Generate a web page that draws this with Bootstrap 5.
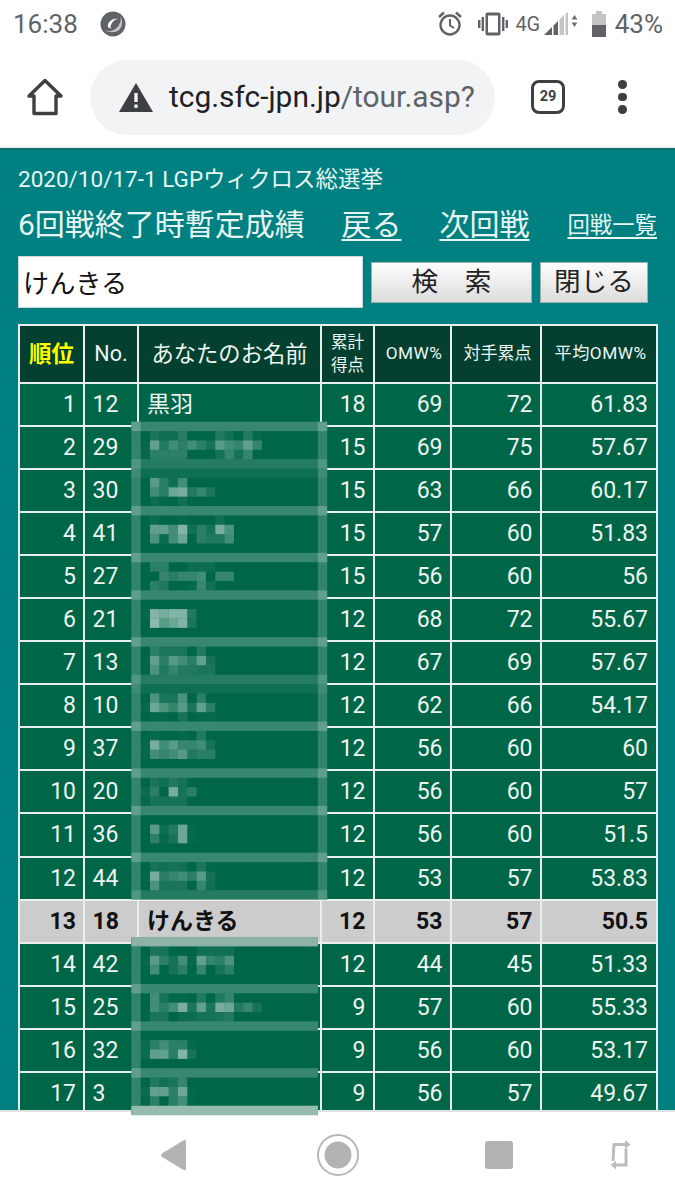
<!DOCTYPE html>
<html lang="ja">
<head>
<meta charset="utf-8">
<title>tour</title>
<link href="https://cdn.jsdelivr.net/npm/bootstrap@5.3.0/dist/css/bootstrap.min.css" rel="stylesheet">
<style>
html,body{height:1200px;margin:0}
body{font-family:Roboto,"Noto Sans CJK JP",sans-serif;background:#fff;width:675px;height:1200px}
.statusline{height:50px;flex:none;color:#5f6368;padding:0 12px 2px 13px}
.clock{font-size:26px;line-height:1}
.ballmark{margin-left:22px}
.net{font-size:20px;line-height:1;letter-spacing:-.3px;margin-left:7px}
.batt{font-size:26px;line-height:1;margin-left:8px}
.vibe{margin-left:15px}
.bars{margin-left:3px}
.cell{margin-left:13px}
.toolline{height:98px;flex:none;padding-bottom:4px}
.homeicon{margin-left:23px}
.urlpill{width:405px;height:75px;border-radius:38px;background:#f1f3f4;margin-left:23px;padding-left:28px;font-size:29.9px;color:#5f6368;white-space:nowrap}
.urlpill b{font-weight:400;color:#202124}
.warnicon{flex:none;margin-right:15px}
.tabcount{width:34px;height:34px;border:3px solid #3c4043;border-radius:8px;font-size:14.5px;font-weight:700;color:#3c4043;margin-left:36px;line-height:1}
.dots{margin-left:53px;gap:4px}
.dots i{display:block;width:8.5px;height:8.5px;border-radius:50%;background:#3c4043}
.pagearea{background:#008080;border-top:2px solid #0b7272;box-shadow:0 -2px 0 #e9f1ef;padding:15px 18px 0;color:#e8f4f2;min-height:0}
.eventline{font-size:22.5px;line-height:28px;height:28px;white-space:nowrap}
.titleline{line-height:40px;margin-top:12px;height:40px;white-space:nowrap}
.titleline a{color:inherit;text-decoration:underline;text-underline-offset:4px;text-decoration-thickness:2px}
.headname{font-size:30px;width:324px}
.headlink{font-size:30px;margin-right:38px}
.headsmall{font-size:22.4px}
.searchline{margin-top:11px;height:52px}
.nameinput{width:345px;height:52px;border:1px solid #cfd8d8;background:#fff;font-size:26.2px;color:#111;padding:0 4px;border-radius:0;outline:0}
.greybtn{height:41px;border:1px solid #9fb0b0;border-radius:0;background:linear-gradient(#fdfdfd,#dcdcdc);color:#222;font-size:26.6px;padding:0;line-height:1;margin-top:6px}
.findbtn{width:161px;margin-left:8px}
.closebtn{width:108px;margin-left:8px}
.rankwrap{margin-top:16px}
.ranktable{--bs-table-bg:#006648;--bs-table-color:#edf5f2;--bs-table-border-color:#e9efec;width:639px;table-layout:fixed;margin:0;border:2px solid #e9efec;font-size:23px}
.ranktable>:not(caption)>*>*{padding:0 7.5px;height:43.1px;vertical-align:middle;border-width:2px;line-height:1;color:#edf5f2;background:#006648;box-shadow:none}
.ranktable thead>tr>th{height:57.5px;background:#03402f;font-weight:400;text-align:center;padding:0;font-size:22.3px}
.ranktable thead>tr>th.rankhead{color:#ffff00;font-weight:700;font-size:22.5px}
.ranktable thead>tr>th.nohead{font-size:21.5px}
.ranktable thead>tr>th.twoline{font-size:16.6px;line-height:23px}
.ranktable thead>tr>th.omw{font-size:17.2px;letter-spacing:.5px;padding-left:3px}
.ranktable thead>tr>th.foe{font-size:17px;padding-left:3px}
.ranktable td:nth-child(2){padding-left:7.5px;text-align:left}
.ranktable td:nth-child(3){padding-left:8px;text-align:left}
.ranktable td:nth-child(1),.ranktable td:nth-child(n+4){text-align:right}
.ranktable td:nth-child(1){padding-right:7px}
.ranktable td:nth-child(7){padding-right:8px}
.ranktable tr.selfrow>td{background:#cccccc;color:#111;font-weight:700}
.w-rank{width:65px}.w-no{width:54px}.w-name{width:183px}.w-pts{width:53px}.w-omw{width:77px}.w-foe{width:90px}.w-avg{width:116px}
.softkeys{height:90px;flex:none;background:#fff;border-top:2px solid #dfe3e2}
.mosaicsheet{position:absolute;left:0;top:0;width:675px;height:1200px;pointer-events:none}
</style>
</head>
<body class="d-flex flex-column overflow-hidden position-relative">

<div class="statusline d-flex align-items-center">
  <span class="clock">16:38</span>
  <svg class="ballmark" width="26" height="26" viewBox="0 0 26 26" aria-hidden="true">
    <circle cx="13" cy="13" r="12.5" fill="#5f6368"/>
    <path d="M5 19c5 3 12 0 15-7 1-3 1-5 0-7 3 4 3 10-1 14-4 3-10 3-14 0z" fill="#c4c6c8"/>
    <path d="M8 13c2-4 6-6 10-5-3 0-6 3-7 6-1 2-1 3 1 3-3 1-5-1-4-4z" fill="#fff"/>
  </svg>
  <span class="ms-auto d-flex align-items-center">
    <svg width="26" height="28" viewBox="0 0 26 28" aria-hidden="true" fill="none" stroke="#5f6368" stroke-width="2.4">
      <circle cx="13" cy="15" r="9.5"/><path d="M13 9v6.5l4 2.500" stroke-width="2"/><path d="M2 7l5-4.500M24 7l-5-4.500" stroke-width="2.6"/>
    </svg>
    <svg class="vibe" width="30" height="26" viewBox="0 0 30 26" aria-hidden="true" fill="#5f6368">
      <path d="M9.500 1.500h11a2 2 0 0 1 2 2v19a2 2 0 0 1-2 2h-11a2 2 0 0 1-2-2v-19a2 2 0 0 1 2-2zm.5 3v17h10v-17z" fill-rule="evenodd"/>
      <rect x="3.600" y="6" width="2.400" height="14"/><rect x="0" y="9" width="2.400" height="8"/><rect x="24" y="6" width="2.400" height="14"/><rect x="27.600" y="9" width="2.400" height="8"/>
    </svg>
    <span class="net">4G</span>
    <svg class="bars" width="35" height="26" viewBox="0 0 35 26" aria-hidden="true">
      <path d="M1 24L9 16v8z" fill="#5f6368"/><path d="M10.500 14.500L15 10v14h-4.500z" fill="#5f6368"/>
      <path d="M16.500 8.500L21 4v20h-4.500z" fill="#c2c4c6"/><path d="M22.500 3L25 1v23h-2.500z" fill="#c2c4c6"/>
      <path d="M31.500 4l3 4.500h-6zM31.500 16l3-4.500h-6z" fill="#6f7378"/>
    </svg>
    <svg class="cell" width="16" height="28" viewBox="0 0 16 28" aria-hidden="true">
      <path d="M5 1h6v3h4v23H1V4h4z" fill="#c2c4c6"/><rect x="1" y="15" width="14" height="12" fill="#5f6368"/>
    </svg>
    <span class="batt">43%</span>
  </span>
</div>

<div class="toolline d-flex align-items-center">
  <svg class="homeicon" width="44" height="40" viewBox="0 0 44 40" aria-hidden="true" fill="none" stroke="#3c4043" stroke-width="3.4" stroke-linejoin="round">
    <path d="M22 3.500L6 19h5v17.500h22V19h5z"/>
  </svg>
  <div class="urlpill d-flex align-items-center">
    <svg class="warnicon" width="36" height="30" viewBox="0 0 36 30" aria-hidden="true">
      <path d="M18 1L35 30H1z" fill="#3c4043"/><rect x="16.300" y="11" width="3.400" height="9" fill="#f1f3f4"/><rect x="16.300" y="22.500" width="3.400" height="3.400" fill="#f1f3f4"/>
    </svg>
    <span><b>tcg.sfc-jpn.jp</b>/tour.asp?</span>
  </div>
  <div class="tabcount d-flex align-items-center justify-content-center">29</div>
  <div class="dots d-flex flex-column"><i></i><i></i><i></i></div>
</div>

<main class="pagearea flex-grow-1 overflow-hidden">
  <div class="eventline">2020/10/17-1 LGPウィクロス総選挙</div>
  <div class="titleline d-flex align-items-center">
    <span class="headname">6回戦終了時暫定成績</span>
    <a class="headlink" href="#">戻る</a>
    <a class="headlink" href="#">次回戦</a>
    <a class="headsmall" href="#">回戦一覧</a>
  </div>
  <div class="searchline d-flex align-items-start">
    <input class="nameinput" type="text" value="けんきる">
    <button class="btn greybtn findbtn" type="button">検　索</button>
    <button class="btn greybtn closebtn" type="button">閉じる</button>
  </div>
  <div class="rankwrap">
    <table class="table table-bordered ranktable">
      <colgroup><col class="w-rank"><col class="w-no"><col class="w-name"><col class="w-pts"><col class="w-omw"><col class="w-foe"><col class="w-avg"></colgroup>
      <thead>
        <tr><th class="rankhead">順位</th><th class="nohead">No.</th><th>あなたのお名前</th><th class="twoline">累計<br>得点</th><th class="omw">OMW%</th><th class="foe">対手累点</th><th class="omw">平均OMW%</th></tr>
      </thead>
      <tbody>
        <tr><td>1</td><td>12</td><td>黒羽</td><td>18</td><td>69</td><td>72</td><td>61.83</td></tr>
        <tr><td>2</td><td>29</td><td></td><td>15</td><td>69</td><td>75</td><td>57.67</td></tr>
        <tr><td>3</td><td>30</td><td></td><td>15</td><td>63</td><td>66</td><td>60.17</td></tr>
        <tr><td>4</td><td>41</td><td></td><td>15</td><td>57</td><td>60</td><td>51.83</td></tr>
        <tr><td>5</td><td>27</td><td></td><td>15</td><td>56</td><td>60</td><td>56</td></tr>
        <tr><td>6</td><td>21</td><td></td><td>12</td><td>68</td><td>72</td><td>55.67</td></tr>
        <tr><td>7</td><td>13</td><td></td><td>12</td><td>67</td><td>69</td><td>57.67</td></tr>
        <tr><td>8</td><td>10</td><td></td><td>12</td><td>62</td><td>66</td><td>54.17</td></tr>
        <tr><td>9</td><td>37</td><td></td><td>12</td><td>56</td><td>60</td><td>60</td></tr>
        <tr><td>10</td><td>20</td><td></td><td>12</td><td>56</td><td>60</td><td>57</td></tr>
        <tr><td>11</td><td>36</td><td></td><td>12</td><td>56</td><td>60</td><td>51.5</td></tr>
        <tr><td>12</td><td>44</td><td></td><td>12</td><td>53</td><td>57</td><td>53.83</td></tr>
        <tr class="selfrow"><td>13</td><td>18</td><td>けんきる</td><td>12</td><td>53</td><td>57</td><td>50.5</td></tr>
        <tr><td>14</td><td>42</td><td></td><td>12</td><td>44</td><td>45</td><td>51.33</td></tr>
        <tr><td>15</td><td>25</td><td></td><td>9</td><td>57</td><td>60</td><td>55.33</td></tr>
        <tr><td>16</td><td>32</td><td></td><td>9</td><td>56</td><td>60</td><td>53.17</td></tr>
        <tr><td>17</td><td>3</td><td></td><td>9</td><td>56</td><td>57</td><td>49.67</td></tr>
      </tbody>
    </table>
  </div>
</main>

<div class="softkeys position-relative">
  <svg width="675" height="88" viewBox="0 1112 675 88" aria-hidden="true" class="d-block">
    <path d="M186 1141v28a1.500 1.500 0 0 1-2 1.200l-22-13.200a2 2 0 0 1 0-3.400l22-13.600a1.500 1.500 0 0 1 2 1z" fill="#b3b3b3"/>
    <circle cx="338" cy="1155" r="20" fill="none" stroke="#b7b7b7" stroke-width="2"/><circle cx="338" cy="1155" r="13.500" fill="#b3b3b3"/>
    <rect x="485" y="1141" width="28" height="28" rx="3" fill="#b3b3b3"/>
    <path d="M613 1161l1-16.500h12M626 1148.500v16.500h-11" fill="none" stroke="#bdbdbd" stroke-width="3"/>
    <path d="M625 1140l5.500 4.500-5.500 4.500zM616 1160.500l-5.500 4.500 5.500 4.500z" fill="#bdbdbd"/>
  </svg>
</div>

<svg id="mosaic" class="mosaicsheet" viewBox="0 0 675 1200" aria-hidden="true"></svg>

<script src="https://cdn.jsdelivr.net/npm/bootstrap@5.3.0/dist/js/bootstrap.bundle.min.js"></script>
<script>
(function(){
  var X0=131.3,Y0=421.7,CW=9.33,CH=9.37,K=.85,out=[];
  function cell(c,r,w,h,fill,a){out.push('<rect x="'+(X0+c*CW).toFixed(2)+'" y="'+(Y0+r*CH).toFixed(2)+'" width="'+(w*CW).toFixed(2)+'" height="'+(h*CH).toFixed(2)+'" fill="'+fill+'"'+(a<1?' fill-opacity="'+a+'"':'')+'/>');}
  // opaque patches
  cell(0,0,21,51,'#006648',1);
  cell(0,55,20,19,'#006648',1);
  // horizontal bands [row, alpha, cols]
  [[0,.22,21],[4,.15,21],[5,.06,21],[9,.22,21],[14,.22,21],[18,.22,21],[23,.22,21],[27,.15,21],[28,.06,21],[32,.22,21],[37,.22,21],[41,.22,21],[46,.22,21],[50,.14,21],[60,.22,20],[64,.22,20],[69,.22,20]].forEach(function(b){cell(0,b[0],b[2],1,'#fff',b[1]);});
  // frame columns
  cell(0,0,1,51,'#fff',.2);cell(20,0,1,51,'#fff',.2);cell(0,56,1,17,'#fff',.2);
  cell(0,55,20,1,'#8fb2a6',1);cell(0,73,20,1,'#96bcaf',1);
  // text residue: row -> {column: alpha}
  var d={1:{2:.12,3:.07,4:.07,5:.18,9:.15,10:.08,12:.15,13:.03},
  2:{1:.03,2:.45,3:.15,4:.3,5:.2,6:.3,7:.2,8:.1,9:.4,10:.3,11:.25,12:.45,13:.25},
  3:{1:.03,2:.2,3:.2,4:.2,5:.2,9:.1,10:.25,11:.1,12:.25},
  6:{2:.4,3:.2,4:.07,5:.3},7:{2:.3,3:.2,4:.5,5:.55,6:.15,7:.25,8:.12},8:{2:.05,3:.02,5:.08},
  10:{2:.05,5:.03,9:.08},11:{2:.45,3:.45,4:.3,5:.6,6:.07,7:.2,8:.1,9:.55,10:.35},12:{2:.35,3:.05,4:.3,5:.5,7:.2,8:.15,9:.15,10:.3},
  15:{2:.2,3:.2,6:.06,7:.06,8:.06},16:{3:.25,4:.18,5:.25,6:.25,7:.3,9:.25,10:.25},17:{2:.2,3:.15,6:.03,7:.25,8:.08},
  20:{1:.03,2:.6,3:.55,4:.6,5:.6,6:.15},21:{2:.65,3:.4,4:.5,5:.6,6:.12},
  24:{2:.2,3:.12,4:.12,5:.12,7:.15},25:{2:.45,3:.2,4:.4,5:.3,6:.2,7:.45,8:.1},26:{2:.35,3:.15,4:.25,5:.15,6:.15,7:.12,8:.12},
  29:{2:.35,3:.12,4:.12,5:.35,7:.2},30:{1:.03,2:.5,3:.35,4:.25,5:.4,6:.12,7:.45,8:.2},31:{2:.03,3:.03,5:.1,7:.03,8:.03},
  33:{2:.03,5:.03,7:.15},34:{1:.03,2:.55,3:.3,4:.4,5:.25,6:.25,7:.3,8:.1},35:{1:.03,2:.3,3:.25,4:.3,5:.4,6:.15,7:.2,8:.2},
  38:{2:.12,3:.07,4:.15,5:.1},39:{1:.05,2:.2,4:.55,5:.1,6:.2},40:{1:.02,2:.1,3:.1,4:.1,5:.1},
  43:{2:.4,3:.07,4:.15,5:.5,6:.03},44:{2:.2,3:.03,4:.1,5:.5,6:.03},
  47:{2:.1,3:.08,4:.1,5:.08,7:.12,8:.02},48:{1:.02,2:.55,3:.2,4:.25,5:.3,6:.2,7:.4,8:.1},49:{2:.35,3:.12,4:.12,5:.12,7:.25,8:.08},
  56:{2:.12,3:.1,7:.08,8:.08,9:.08,10:.08},57:{1:.03,2:.4,3:.2,4:.1,5:.3,6:.03,7:.45,8:.25,9:.2,10:.35},58:{2:.3,4:.1,5:.2,7:.25,9:.1,10:.2},
  61:{2:.3,3:.1,4:.02,5:.02,7:.15,9:.15,10:.25},62:{2:.3,3:.2,4:.3,5:.55,6:.12,7:.45,8:.12,9:.55,10:.5,11:.15,12:.25,13:.1},63:{2:.12,3:.12,5:.05,6:.06,7:.1,8:.1,9:.12,10:.15},
  66:{1:.05,2:.2,3:.3,4:.2,5:.2,6:.03},67:{1:.05,2:.45,3:.45,4:.2,5:.6,6:.1},
  70:{2:.15,3:.08,4:.12,5:.25},71:{1:.05,2:.45,3:.45,4:.2,5:.5,6:.02},72:{1:.02,2:.2,4:.2,5:.3,6:.02}};
  Object.keys(d).forEach(function(r){Object.keys(d[r]).forEach(function(c){cell(+c,+r,1,1,'#fff',(d[r][c]*K).toFixed(3));});});
  document.getElementById('mosaic').innerHTML=out.join('');
})();
</script>
</body>
</html>
